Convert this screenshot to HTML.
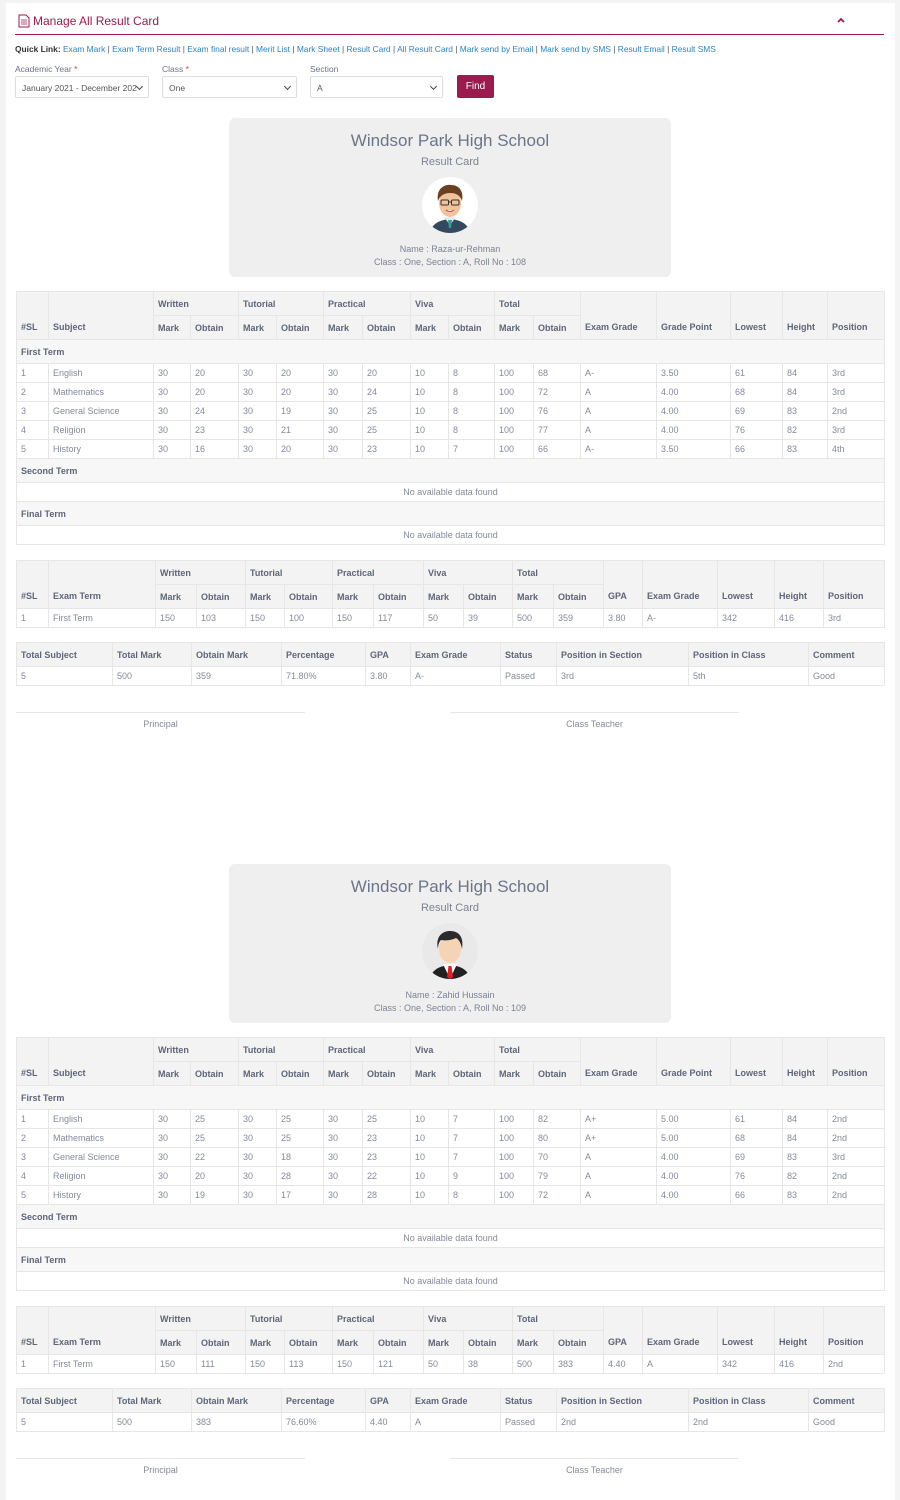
<!DOCTYPE html>
<html><head><meta charset="utf-8">
<style>
*{margin:0;padding:0;box-sizing:border-box}
body{width:900px;height:1500px;background:#f4f4f4;font-family:"Liberation Sans",Arial,sans-serif;color:#6b7385;position:relative;overflow:hidden}
.panel{position:absolute;left:6px;top:3px;width:889px;height:1497px;background:#fff}
.abs{position:absolute}
.title{left:18px;top:14px;font-size:12px;color:#9b1b4f;display:flex;align-items:center;gap:3px}
.hr{left:15px;top:34px;width:869px;height:1px;background:#9b1b4f}
.ql{left:15px;top:44px;font-size:8.4px;color:#555}
.ql b{color:#333}
.ql span{color:#2a84c4}
.lbl{font-size:8.5px;color:#6b7385;top:64px}
.lbl i{color:#d33;font-style:normal}
.sel{top:76px;height:22px;border:1px solid #ddd;border-radius:2px;font-size:8.5px;color:#555;padding:6px 6px;background:#fff}
.sel:after{content:"";position:absolute;right:6px;top:7px;width:4px;height:4px;border-right:1.2px solid #444;border-bottom:1.2px solid #444;transform:rotate(45deg)}
.find{left:457px;top:75px;width:37px;height:23px;background:#9b1b4f;color:#fff;font-size:10px;text-align:center;line-height:23px;border-radius:2px}
.card{left:229px;width:442px;height:159px;background:#efefef;border-radius:6px;text-align:center}
.card .s{font-size:17px;color:#6b7588;margin-top:13px}
.card .r{font-size:11px;color:#7b8393;margin-top:5px}
.card .av{width:56px;height:56px;border-radius:50%;background:#fff;margin:9px auto 0;overflow:hidden}
.card .n{font-size:9px;color:#7b8393;margin-top:10px;line-height:13px}
table{position:absolute;left:16px;width:868px;border-collapse:collapse;table-layout:fixed;font-size:9px}
td,th{border:1px solid #e6e6e6;padding:0 4px;text-align:left;white-space:nowrap;overflow:hidden;color:#838a99;font-weight:normal}
th{background:#f3f3f3;color:#5d6678;font-weight:bold;height:24px}
th[rowspan]{vertical-align:bottom;padding-bottom:7px}
tr.d td{height:19px}
tr.g td{background:#f7f7f7;font-weight:bold;color:#5d6678;height:24px}
tr.nd td{text-align:center;height:19px}
.sig{height:1px;background:#e6e6e6;width:289px}
.sigt{font-size:9px;color:#838a99;width:289px;text-align:center}
</style></head><body>
<div class="panel"></div>
<div class="abs title"><svg width="12" height="14" viewBox="0 0 12 14"><path d="M1 1h7l3 3v9H1z" fill="none" stroke="#9b1b4f" stroke-width="1"/><path d="M3 6h6M3 8h6M3 10h6" stroke="#9b1b4f" stroke-width="0.8"/></svg>Manage All Result Card</div>
<svg class="abs" style="left:836px;top:16px" width="10" height="8" viewBox="0 0 10 8"><path d="M2 6l3-3 3 3" fill="none" stroke="#9b1b4f" stroke-width="1.8"/></svg>
<div class="abs hr"></div>
<div class="abs ql"><b>Quick Link:</b> <span>Exam Mark</span> | <span>Exam Term Result</span> | <span>Exam final result</span> | <span>Merit List</span> | <span>Mark Sheet</span> | <span>Result Card</span> | <span>All Result Card</span> | <span>Mark send by Email</span> | <span>Mark send by SMS</span> | <span>Result Email</span> | <span>Result SMS</span></div>
<div class="abs lbl" style="left:15px">Academic Year <i>*</i></div>
<div class="abs lbl" style="left:162px">Class <i>*</i></div>
<div class="abs lbl" style="left:310px">Section</div>
<div class="abs sel" style="left:15px;width:134px">January 2021 - December 202</div>
<div class="abs sel" style="left:162px;width:135px">One</div>
<div class="abs sel" style="left:310px;width:133px">A</div>
<div class="abs find">Find</div>

<div class="abs card" style="top:118px">
<div class="s">Windsor Park High School</div><div class="r">Result Card</div>
<div class="av"><svg width="56" height="56" viewBox="0 0 56 56"><path d="M8 56c2-10 10-13 20-14 10 1 18 4 20 14z" fill="#34495e"/><path d="M22 40h12l-6 8z" fill="#dfe9ef"/><path d="M26 43h4l-1 8h-2z" fill="#2aa39a"/><ellipse cx="28" cy="26" rx="11" ry="14" fill="#f2c29a"/><path d="M16 24c-2-12 6-17 13-16 8 0 13 6 11 16-2-6-6-8-12-8-5 0-10 2-12 8z" fill="#6b3f22"/><rect x="19" y="23" width="7.5" height="5" rx="1" fill="none" stroke="#333" stroke-width="1"/><rect x="29.5" y="23" width="7.5" height="5" rx="1" fill="none" stroke="#333" stroke-width="1"/><path d="M26.5 25h3" stroke="#333"/><path d="M24 33q4 3 8 0" fill="#fff" stroke="#a33" stroke-width=".8"/></svg></div>
<div class="n">Name : Raza-ur-Rehman<br>Class : One, Section : A, Roll No : 108</div>
</div>

<table style="top:291px">
<colgroup><col style="width:32px"><col style="width:105px"><col style="width:37px"><col style="width:48px"><col style="width:38px"><col style="width:47px"><col style="width:39px"><col style="width:48px"><col style="width:38px"><col style="width:46px"><col style="width:39px"><col style="width:47px"><col style="width:76px"><col style="width:74px"><col style="width:52px"><col style="width:45px"><col style="width:57px"></colgroup>
<tr><th rowspan="2">#SL</th><th rowspan="2">Subject</th><th colspan="2">Written</th><th colspan="2">Tutorial</th><th colspan="2">Practical</th><th colspan="2">Viva</th><th colspan="2">Total</th><th rowspan="2">Exam Grade</th><th rowspan="2">Grade Point</th><th rowspan="2">Lowest</th><th rowspan="2">Height</th><th rowspan="2">Position</th></tr>
<tr><th>Mark</th><th>Obtain</th><th>Mark</th><th>Obtain</th><th>Mark</th><th>Obtain</th><th>Mark</th><th>Obtain</th><th>Mark</th><th>Obtain</th></tr>
<tr class="g"><td colspan="17">First Term</td></tr>
<tr class="d"><td>1</td><td>English</td><td>30</td><td>20</td><td>30</td><td>20</td><td>30</td><td>20</td><td>10</td><td>8</td><td>100</td><td>68</td><td>A-</td><td>3.50</td><td>61</td><td>84</td><td>3rd</td></tr>
<tr class="d"><td>2</td><td>Mathematics</td><td>30</td><td>20</td><td>30</td><td>20</td><td>30</td><td>24</td><td>10</td><td>8</td><td>100</td><td>72</td><td>A</td><td>4.00</td><td>68</td><td>84</td><td>3rd</td></tr>
<tr class="d"><td>3</td><td>General Science</td><td>30</td><td>24</td><td>30</td><td>19</td><td>30</td><td>25</td><td>10</td><td>8</td><td>100</td><td>76</td><td>A</td><td>4.00</td><td>69</td><td>83</td><td>2nd</td></tr>
<tr class="d"><td>4</td><td>Religion</td><td>30</td><td>23</td><td>30</td><td>21</td><td>30</td><td>25</td><td>10</td><td>8</td><td>100</td><td>77</td><td>A</td><td>4.00</td><td>76</td><td>82</td><td>3rd</td></tr>
<tr class="d"><td>5</td><td>History</td><td>30</td><td>16</td><td>30</td><td>20</td><td>30</td><td>23</td><td>10</td><td>7</td><td>100</td><td>66</td><td>A-</td><td>3.50</td><td>66</td><td>83</td><td>4th</td></tr>
<tr class="g"><td colspan="17">Second Term</td></tr>
<tr class="nd"><td colspan="17">No available data found</td></tr>
<tr class="g"><td colspan="17">Final Term</td></tr>
<tr class="nd"><td colspan="17">No available data found</td></tr>
</table>

<table style="top:560px">
<colgroup><col style="width:32px"><col style="width:107px"><col style="width:41px"><col style="width:49px"><col style="width:39px"><col style="width:48px"><col style="width:41px"><col style="width:50px"><col style="width:40px"><col style="width:49px"><col style="width:41px"><col style="width:50px"><col style="width:39px"><col style="width:75px"><col style="width:57px"><col style="width:49px"><col style="width:61px"></colgroup>
<tr><th rowspan="2">#SL</th><th rowspan="2">Exam Term</th><th colspan="2">Written</th><th colspan="2">Tutorial</th><th colspan="2">Practical</th><th colspan="2">Viva</th><th colspan="2">Total</th><th rowspan="2">GPA</th><th rowspan="2">Exam Grade</th><th rowspan="2">Lowest</th><th rowspan="2">Height</th><th rowspan="2">Position</th></tr>
<tr><th>Mark</th><th>Obtain</th><th>Mark</th><th>Obtain</th><th>Mark</th><th>Obtain</th><th>Mark</th><th>Obtain</th><th>Mark</th><th>Obtain</th></tr>
<tr class="d"><td>1</td><td>First Term</td><td>150</td><td>103</td><td>150</td><td>100</td><td>150</td><td>117</td><td>50</td><td>39</td><td>500</td><td>359</td><td>3.80</td><td>A-</td><td>342</td><td>416</td><td>3rd</td></tr>
</table>

<table style="top:642px">
<colgroup><col style="width:96px"><col style="width:79px"><col style="width:90px"><col style="width:84px"><col style="width:45px"><col style="width:90px"><col style="width:56px"><col style="width:132px"><col style="width:120px"><col style="width:76px"></colgroup>
<tr><th>Total Subject</th><th>Total Mark</th><th>Obtain Mark</th><th>Percentage</th><th>GPA</th><th>Exam Grade</th><th>Status</th><th>Position in Section</th><th>Position in Class</th><th>Comment</th></tr>
<tr class="d"><td>5</td><td>500</td><td>359</td><td>71.80%</td><td>3.80</td><td>A-</td><td>Passed</td><td>3rd</td><td>5th</td><td>Good</td></tr>
</table>
<div class="abs sig" style="left:16px;top:712px"></div><div class="abs sig" style="left:450px;top:712px"></div>
<div class="abs sigt" style="left:16px;top:719px">Principal</div><div class="abs sigt" style="left:450px;top:719px">Class Teacher</div>

<div class="abs card" style="top:864px">
<div class="s">Windsor Park High School</div><div class="r">Result Card</div>
<div class="av" style="background:#e9e9e9"><svg width="56" height="56" viewBox="0 0 56 56"><path d="M8 56c2-10 10-13 20-14 10 1 18 4 20 14z" fill="#222"/><path d="M21 41h14l-7 15z" fill="#fff"/><path d="M26.5 43h3l1.5 11-3 2-3-2z" fill="#e02020"/><ellipse cx="28" cy="26" rx="11" ry="14" fill="#f5d3b5"/><path d="M16 26c-3-13 5-18 12-18 9 0 14 6 12 18-1-7-4-10-6-11-4 2-10 3-15 2-2 2-3 5-3 9z" fill="#2b2b2b"/></svg></div>
<div class="n">Name : Zahid Hussain<br>Class : One, Section : A, Roll No : 109</div>
</div>

<table style="top:1037px">
<colgroup><col style="width:32px"><col style="width:105px"><col style="width:37px"><col style="width:48px"><col style="width:38px"><col style="width:47px"><col style="width:39px"><col style="width:48px"><col style="width:38px"><col style="width:46px"><col style="width:39px"><col style="width:47px"><col style="width:76px"><col style="width:74px"><col style="width:52px"><col style="width:45px"><col style="width:57px"></colgroup>
<tr><th rowspan="2">#SL</th><th rowspan="2">Subject</th><th colspan="2">Written</th><th colspan="2">Tutorial</th><th colspan="2">Practical</th><th colspan="2">Viva</th><th colspan="2">Total</th><th rowspan="2">Exam Grade</th><th rowspan="2">Grade Point</th><th rowspan="2">Lowest</th><th rowspan="2">Height</th><th rowspan="2">Position</th></tr>
<tr><th>Mark</th><th>Obtain</th><th>Mark</th><th>Obtain</th><th>Mark</th><th>Obtain</th><th>Mark</th><th>Obtain</th><th>Mark</th><th>Obtain</th></tr>
<tr class="g"><td colspan="17">First Term</td></tr>
<tr class="d"><td>1</td><td>English</td><td>30</td><td>25</td><td>30</td><td>25</td><td>30</td><td>25</td><td>10</td><td>7</td><td>100</td><td>82</td><td>A+</td><td>5.00</td><td>61</td><td>84</td><td>2nd</td></tr>
<tr class="d"><td>2</td><td>Mathematics</td><td>30</td><td>25</td><td>30</td><td>25</td><td>30</td><td>23</td><td>10</td><td>7</td><td>100</td><td>80</td><td>A+</td><td>5.00</td><td>68</td><td>84</td><td>2nd</td></tr>
<tr class="d"><td>3</td><td>General Science</td><td>30</td><td>22</td><td>30</td><td>18</td><td>30</td><td>23</td><td>10</td><td>7</td><td>100</td><td>70</td><td>A</td><td>4.00</td><td>69</td><td>83</td><td>3rd</td></tr>
<tr class="d"><td>4</td><td>Religion</td><td>30</td><td>20</td><td>30</td><td>28</td><td>30</td><td>22</td><td>10</td><td>9</td><td>100</td><td>79</td><td>A</td><td>4.00</td><td>76</td><td>82</td><td>2nd</td></tr>
<tr class="d"><td>5</td><td>History</td><td>30</td><td>19</td><td>30</td><td>17</td><td>30</td><td>28</td><td>10</td><td>8</td><td>100</td><td>72</td><td>A</td><td>4.00</td><td>66</td><td>83</td><td>2nd</td></tr>
<tr class="g"><td colspan="17">Second Term</td></tr>
<tr class="nd"><td colspan="17">No available data found</td></tr>
<tr class="g"><td colspan="17">Final Term</td></tr>
<tr class="nd"><td colspan="17">No available data found</td></tr>
</table>

<table style="top:1306px">
<colgroup><col style="width:32px"><col style="width:107px"><col style="width:41px"><col style="width:49px"><col style="width:39px"><col style="width:48px"><col style="width:41px"><col style="width:50px"><col style="width:40px"><col style="width:49px"><col style="width:41px"><col style="width:50px"><col style="width:39px"><col style="width:75px"><col style="width:57px"><col style="width:49px"><col style="width:61px"></colgroup>
<tr><th rowspan="2">#SL</th><th rowspan="2">Exam Term</th><th colspan="2">Written</th><th colspan="2">Tutorial</th><th colspan="2">Practical</th><th colspan="2">Viva</th><th colspan="2">Total</th><th rowspan="2">GPA</th><th rowspan="2">Exam Grade</th><th rowspan="2">Lowest</th><th rowspan="2">Height</th><th rowspan="2">Position</th></tr>
<tr><th>Mark</th><th>Obtain</th><th>Mark</th><th>Obtain</th><th>Mark</th><th>Obtain</th><th>Mark</th><th>Obtain</th><th>Mark</th><th>Obtain</th></tr>
<tr class="d"><td>1</td><td>First Term</td><td>150</td><td>111</td><td>150</td><td>113</td><td>150</td><td>121</td><td>50</td><td>38</td><td>500</td><td>383</td><td>4.40</td><td>A</td><td>342</td><td>416</td><td>2nd</td></tr>
</table>

<table style="top:1388px">
<colgroup><col style="width:96px"><col style="width:79px"><col style="width:90px"><col style="width:84px"><col style="width:45px"><col style="width:90px"><col style="width:56px"><col style="width:132px"><col style="width:120px"><col style="width:76px"></colgroup>
<tr><th>Total Subject</th><th>Total Mark</th><th>Obtain Mark</th><th>Percentage</th><th>GPA</th><th>Exam Grade</th><th>Status</th><th>Position in Section</th><th>Position in Class</th><th>Comment</th></tr>
<tr class="d"><td>5</td><td>500</td><td>383</td><td>76.60%</td><td>4.40</td><td>A</td><td>Passed</td><td>2nd</td><td>2nd</td><td>Good</td></tr>
</table>
<div class="abs sig" style="left:16px;top:1458px"></div><div class="abs sig" style="left:450px;top:1458px"></div>
<div class="abs sigt" style="left:16px;top:1465px">Principal</div><div class="abs sigt" style="left:450px;top:1465px">Class Teacher</div>
</body></html>
